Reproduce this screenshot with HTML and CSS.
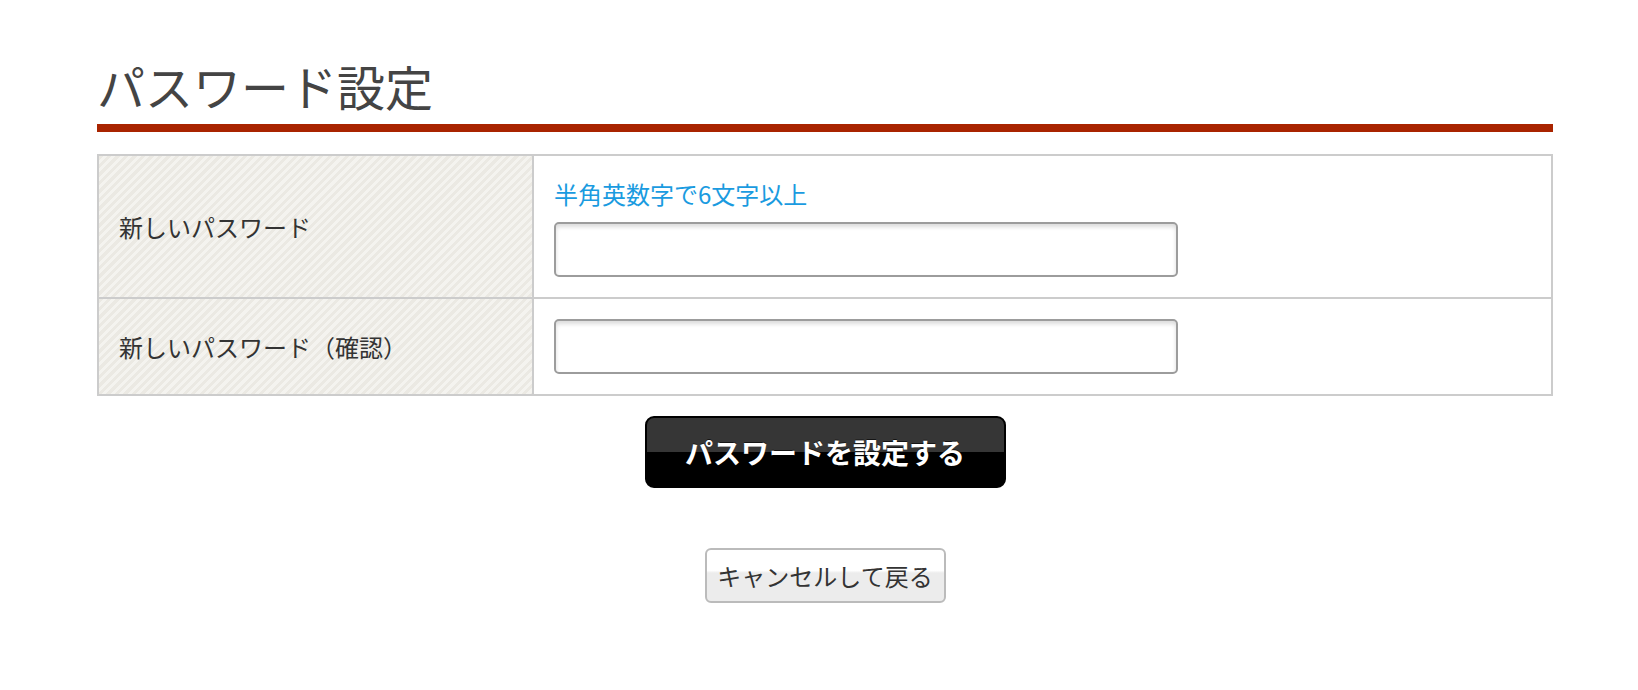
FILE: index.html
```html
<!DOCTYPE html>
<html lang="ja">
<head>
<meta charset="utf-8">
<title>パスワード設定</title>
<link rel="stylesheet" href="styles.css">
</head>
<body>
<div class="page">
  <h1 class="title">パスワード設定</h1>
  <div class="form-table">
    <div class="label">新しいパスワード</div>
    <div class="field">
      <p class="hint">半角英数字で6文字以上</p>
      <input class="text-input" type="password">
    </div>
    <div class="label row2">新しいパスワード（確認）</div>
    <div class="field row2">
      <input class="text-input" type="password">
    </div>
  </div>
  <div class="actions">
    <button class="btn-primary" type="button">パスワードを設定する</button>
    <button class="btn-cancel" type="button">キャンセルして戻る</button>
  </div>
</div>
</body>
</html>
```
FILE: styles.css
```css
html, body {
  margin: 0;
  padding: 0;
  background: #fff;
}
body {
  font-family: "Noto Sans CJK JP", "Noto Sans", sans-serif;
  color: #333;
}
.page {
  width: 1456px;
  margin-left: 97px;
  padding-top: 57px;
}
.title {
  margin: 0;
  font-size: 48px;
  line-height: 56px;
  font-weight: normal;
  color: #444;
  padding-bottom: 11px;
  border-bottom: 8px solid #a92400;
}
.form-table {
  margin-top: 22px;
  display: grid;
  grid-template-columns: 435px 1fr;
  border: 2px solid #ccc;
}
.label {
  box-sizing: border-box;
  border-right: 2px solid #ccc;
  display: flex;
  align-items: center;
  padding-left: 20px;
  font-size: 24px;
  color: #333;
  background: repeating-linear-gradient(135deg, #ebe9e3 0 3px, #f4f3ef 3px 6px);
}
.row2 {
  border-top: 2px solid #ccc;
}
.field {
  padding: 20px;
}
.hint {
  margin: 0 0 10px;
  font-size: 24px;
  line-height: 36px;
  color: #1a9be0;
}
.text-input {
  display: block;
  box-sizing: border-box;
  width: 624px;
  height: 55px;
  margin: 0;
  border: 2px solid #9c9c9c;
  border-radius: 5px;
  background: #fff;
  box-shadow: inset 0 3px 4px rgba(0, 0, 0, 0.14);
  outline: none;
}
.actions {
  display: flex;
  flex-direction: column;
  align-items: center;
  padding-top: 20px;
}
.btn-primary {
  box-sizing: border-box;
  width: 361px;
  height: 72px;
  border: 2px solid #000;
  border-radius: 9px;
  background: linear-gradient(#363636 0, #363636 50%, #000 50%, #000 100%);
  color: #fff;
  font-family: inherit;
  font-size: 28px;
  font-weight: bold;
  text-shadow: 0 -1px 0 rgba(0, 0, 0, 0.6);
  padding: 0;
}
.btn-cancel {
  box-sizing: border-box;
  margin-top: 60px;
  width: 241px;
  height: 55px;
  border: 2px solid #bbb;
  border-radius: 6px;
  background: linear-gradient(#fff 0, #fff 40%, #ececec 45%, #ececec 100%);
  color: #333;
  font-family: inherit;
  font-size: 24px;
  padding: 0;
}
```
